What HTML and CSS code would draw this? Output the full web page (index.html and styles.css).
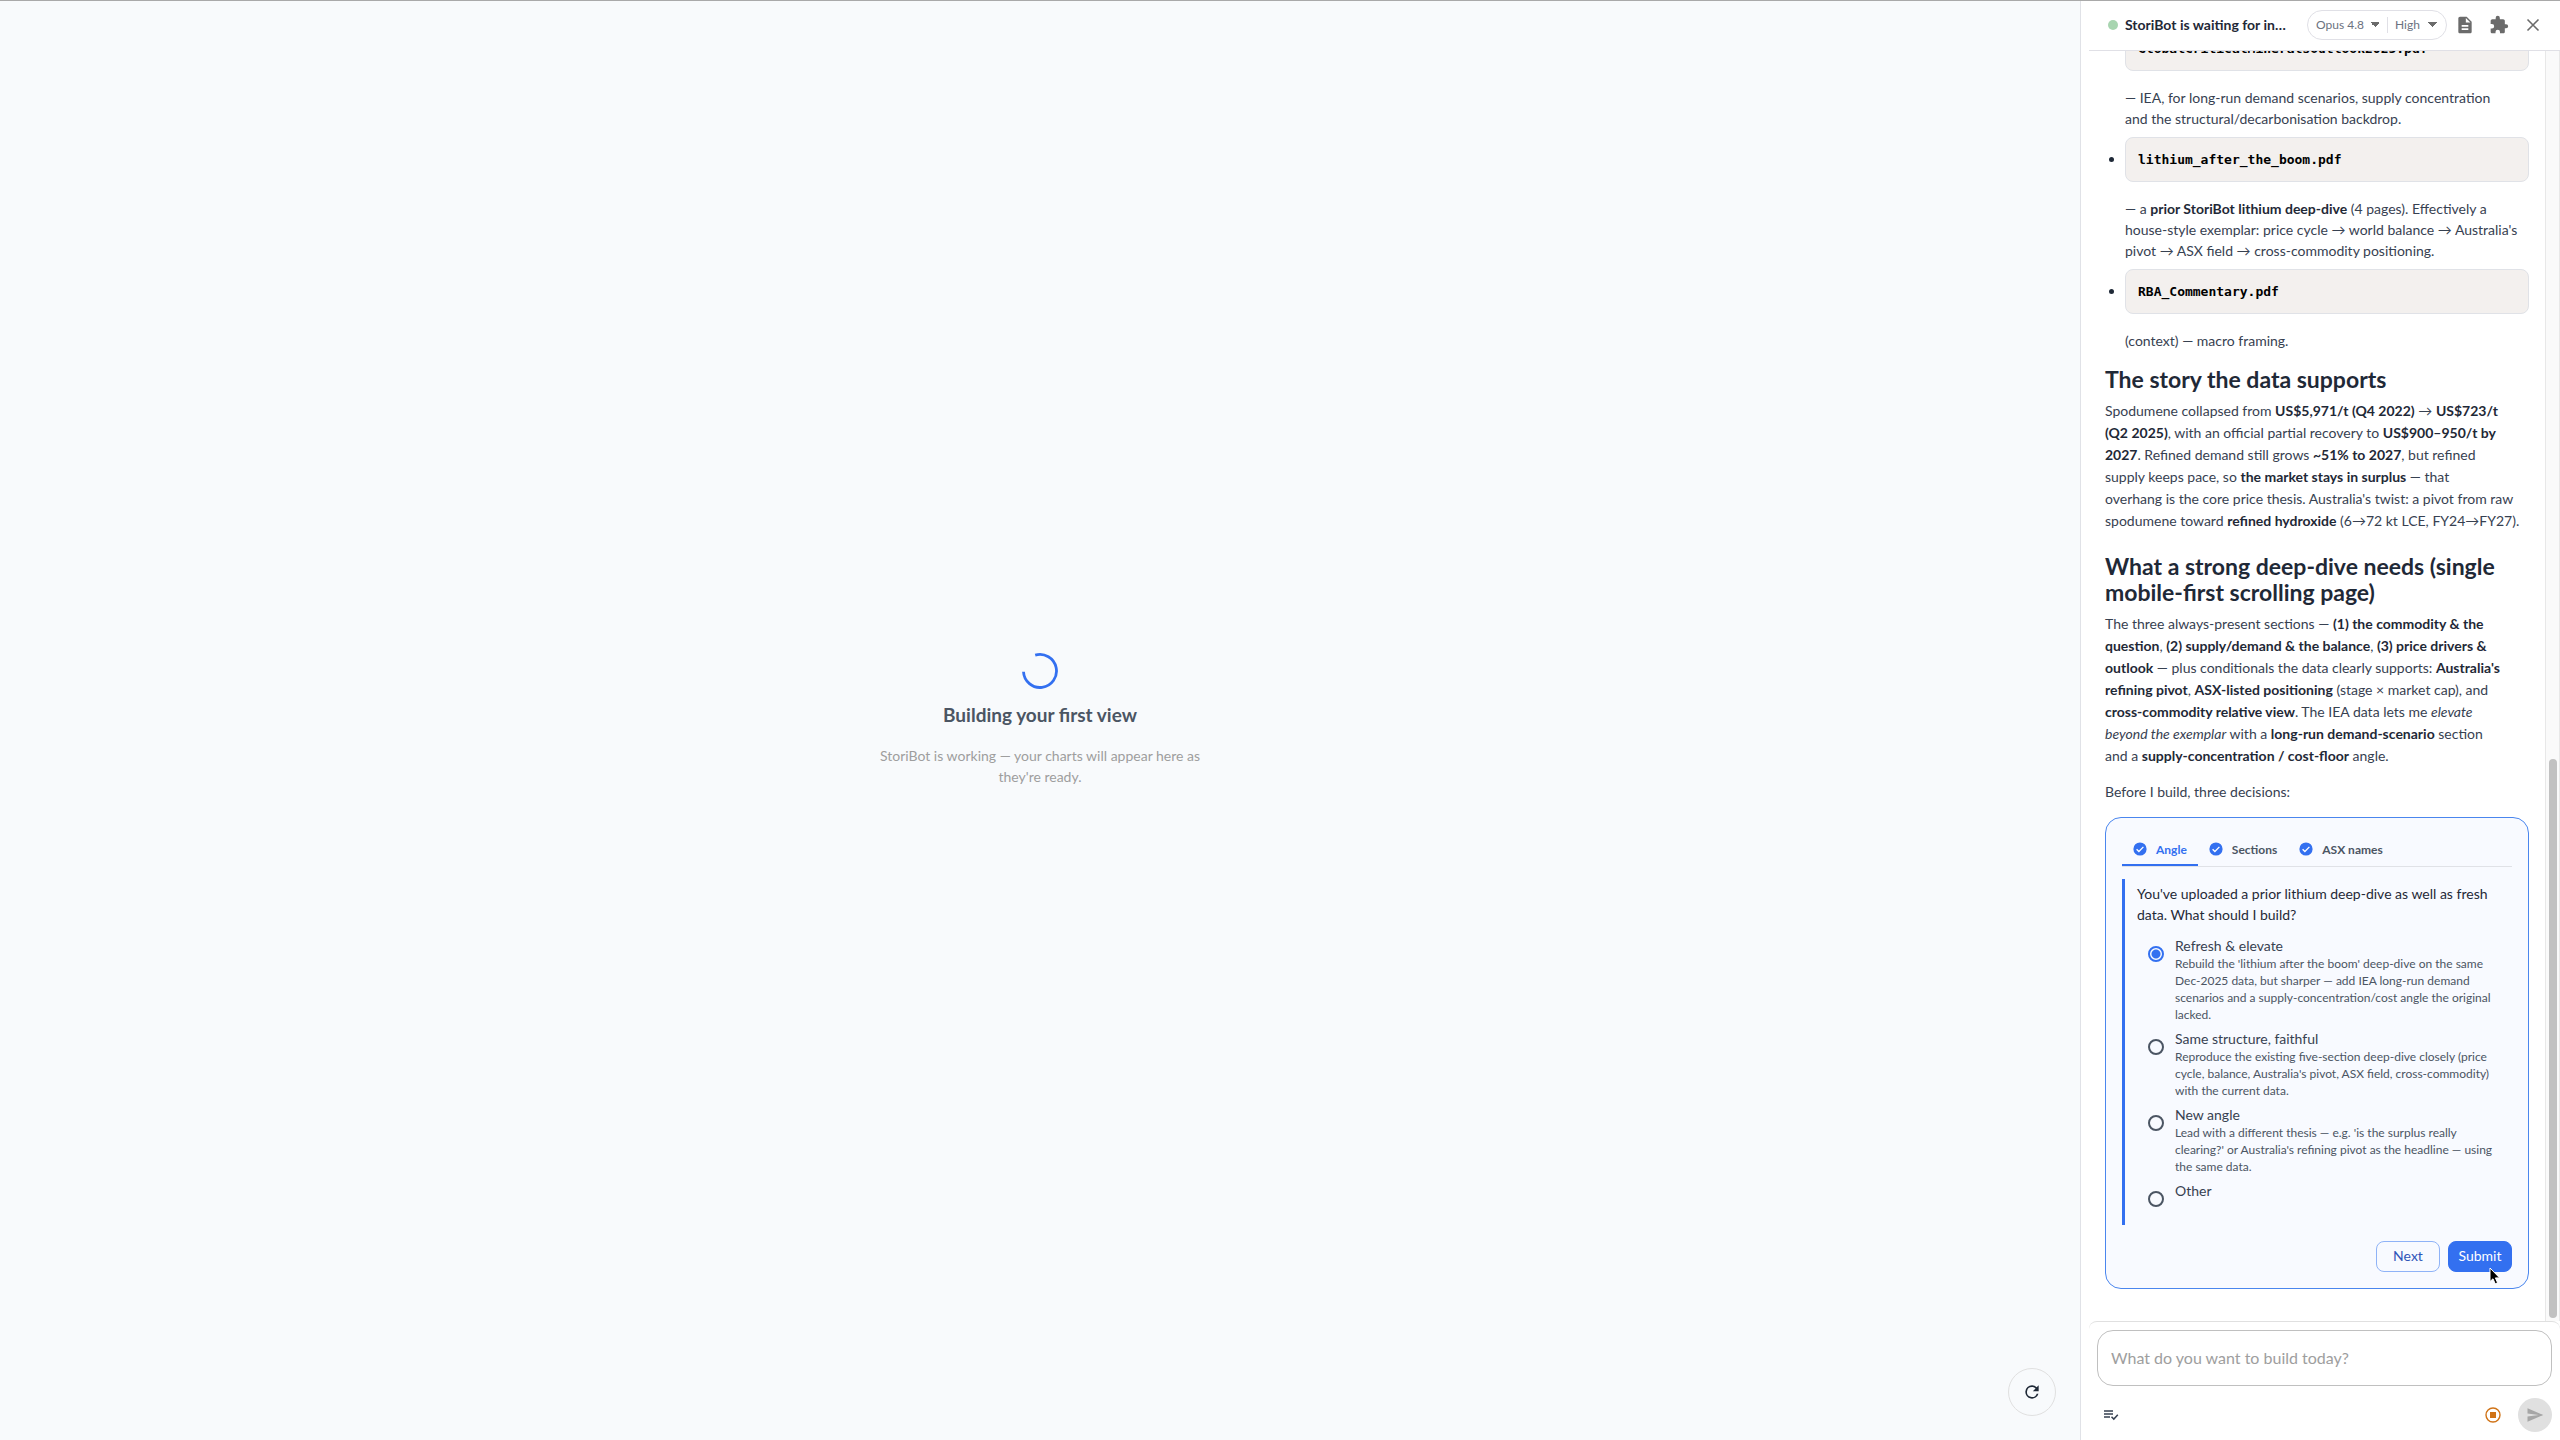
FILE: index.html
```
<!DOCTYPE html>
<html lang="en">
  <head>
    <meta charset="UTF-8" />
    <meta name="viewport" content="width=device-width, initial-scale=1.0" />
    <title>StoriBot</title>
    <link rel="stylesheet" href="styles.css">
  </head>

  <body>
    <!-- CANVAS -->
    <main class="canvas">
      <div class="building">
        <svg class="spinner" viewBox="0 0 36 36" width="36" height="36">
          <path d="M13.2 2.2A16.5 16.5 0 1 1 1.5 18.8" fill="none" stroke="#3370f0" stroke-width="2.8" />
        </svg>
        <h2>Building your first view</h2>
        <p>StoriBot is working — your charts will appear here as they're ready.</p>
      </div>
      <button class="refresh" aria-label="Refresh">
        <svg viewBox="0 0 24 24" width="20" height="20">
          <path d="M17.65 6.35A7.96 7.96 0 0 0 12 4a8 8 0 1 0 7.73 10h-2.08A6 6 0 1 1 12 6c1.66 0 3.14.69 4.22 1.78L13 11h7V4z" fill="#1f2937" />
        </svg>
      </button>
    </main>

    <!-- CHAT PANEL -->
    <aside class="panel">
      <header class="panel-header">
        <span class="status-dot"></span>
        <h1 class="panel-title">StoriBot is waiting for input from you</h1>
        <div class="model-pill">
          <select class="select-model" aria-label="Model"><option>Opus 4.8</option></select>
          <select class="select-effort" aria-label="Effort"><option>High</option></select>
        </div>
        <div class="header-icons">
          <button class="icon-button" aria-label="Documents">
            <svg viewBox="0 0 24 24" width="20" height="20"><path d="M14 2H6c-1.100 0-2 .9-2 2v16c0 1.100.9 2 2 2h12c1.100 0 2-.9 2-2V8l-6-6zm2 16H8v-2h8v2zm0-4H8v-2h8v2zm-3-5V3.500L18.500 9H13z" fill="#6b6b6b" /></svg>
          </button>
          <button class="icon-button" aria-label="Extensions">
            <svg viewBox="0 0 24 24" width="20" height="20"><path d="M20.500 11H19V7c0-1.100-.9-2-2-2h-4V3.500a2.500 2.500 0 0 0-5 0V5H4c-1.100 0-2 .9-2 2v3.800h1.500a2.700 2.700 0 0 1 0 5.400H2V20c0 1.100.9 2 2 2h3.800v-1.500a2.700 2.700 0 0 1 5.400 0V22H17c1.100 0 2-.9 2-2v-4h1.500a2.500 2.500 0 0 0 0-5z" fill="#6b6b6b" /></svg>
          </button>
          <button class="icon-button" aria-label="Close">
            <svg viewBox="0 0 20 20" width="20" height="20"><path d="M4.500 4.500l11 11M15.500 4.500l-11 11" stroke="#6b6b6b" stroke-width="1.600" /></svg>
          </button>
        </div>
      </header>

      <section class="conversation">
        <div class="messages">
          <ul class="sources">
            <li>
              <pre>GlobalCriticalMineralsOutlook2025.pdf</pre>
              <p>— IEA, for long-run demand scenarios, supply concentration<br />and the structural/decarbonisation backdrop.</p>
            </li>
            <li>
              <pre>lithium_after_the_boom.pdf</pre>
              <p>— a <b>prior StoriBot lithium deep-dive</b> (4 pages). Effectively a house-style exemplar: price cycle → world balance → Australia's pivot → ASX field → cross-commodity positioning.</p>
            </li>
            <li>
              <pre>RBA_Commentary.pdf</pre>
              <p>(context) — macro framing.</p>
            </li>
          </ul>

          <h2>The story the data supports</h2>
          <p class="prose">Spodumene collapsed from <b>US$5,971/t (Q4 2022)</b> → <b>US$723/t<br />(Q2 2025)</b>, with an official partial recovery to <b>US$900–950/t by<br />2027</b>. Refined demand still grows <b>~51% to 2027</b>, but refined<br />supply keeps pace, so <b>the market stays in surplus</b> — that<br />overhang is the core price thesis. Australia's twist: a pivot from raw<br />spodumene toward <b>refined hydroxide</b> (6→72 kt LCE, FY24→FY27).</p>

          <h2>What a strong deep-dive needs (single mobile-first scrolling page)</h2>
          <p class="prose">The three always-present sections — <b>(1) the commodity &amp; the<br />question</b>, <b>(2) supply/demand &amp; the balance</b>, <b>(3) price drivers &amp;<br />outlook</b> — plus conditionals the data clearly supports: <b>Australia's<br />refining pivot</b>, <b>ASX-listed positioning</b> (stage × market cap), and<br /><b>cross-commodity relative view</b>. The IEA data lets me <i>elevate<br />beyond the exemplar</i> with a <b>long-run demand-scenario</b> section<br />and a <b>supply-concentration / cost-floor</b> angle.</p>
          <p class="prose">Before I build, three decisions:</p>

          <form class="question-card">
            <div class="tabs" role="tablist">
              <button type="button" class="tab active" role="tab" aria-selected="true">
                <svg viewBox="0 0 14 14" width="14" height="14"><circle cx="7" cy="7" r="6.600" fill="#3370f0" /><path d="M3.600 7.200l2.300 2.300 4.500-4.600" fill="none" stroke="#fff" stroke-width="1.300" /></svg>
                Angle
              </button>
              <button type="button" class="tab" role="tab">
                <svg viewBox="0 0 14 14" width="14" height="14"><circle cx="7" cy="7" r="6.600" fill="#3370f0" /><path d="M3.600 7.200l2.300 2.300 4.500-4.600" fill="none" stroke="#fff" stroke-width="1.300" /></svg>
                Sections
              </button>
              <button type="button" class="tab" role="tab">
                <svg viewBox="0 0 14 14" width="14" height="14"><circle cx="7" cy="7" r="6.600" fill="#3370f0" /><path d="M3.600 7.200l2.300 2.300 4.500-4.600" fill="none" stroke="#fff" stroke-width="1.300" /></svg>
                ASX names
              </button>
            </div>

            <fieldset class="question">
              <legend>You've uploaded a prior lithium deep-dive as well as fresh data. What should I build?</legend>
              <label class="option">
                <input type="radio" name="angle" checked />
                <span class="option-text">
                  <span class="option-title">Refresh &amp; elevate</span>
                  <span class="option-desc">Rebuild the 'lithium after the boom' deep-dive on the same<br />Dec-2025 data, but sharper — add IEA long-run demand<br />scenarios and a supply-concentration/cost angle the original<br />lacked.</span>
                </span>
              </label>
              <label class="option">
                <input type="radio" name="angle" />
                <span class="option-text">
                  <span class="option-title">Same structure, faithful</span>
                  <span class="option-desc">Reproduce the existing five-section deep-dive closely (price cycle, balance, Australia's pivot, ASX field, cross-commodity) with the current data.</span>
                </span>
              </label>
              <label class="option">
                <input type="radio" name="angle" />
                <span class="option-text">
                  <span class="option-title">New angle</span>
                  <span class="option-desc">Lead with a different thesis — e.g. 'is the surplus really<br />clearing?' or Australia's refining pivot as the headline — using<br />the same data.</span>
                </span>
              </label>
              <label class="option">
                <input type="radio" name="angle" />
                <span class="option-text">
                  <span class="option-title">Other</span>
                </span>
              </label>
            </fieldset>

            <div class="actions">
              <button type="button" class="btn">Next</button>
              <button type="button" class="btn btn-primary">
                Submit
                <svg class="cursor" viewBox="0 0 12 18" width="12" height="18"><path d="M1 1v13.500l3-2.700 2.200 5 2.400-1-2.200-4.900h4.200z" fill="#000" stroke="#fff" stroke-width="1" /></svg>
              </button>
            </div>
          </form>
        </div>
        <div class="scroll-track"><div class="scroll-thumb"></div></div>
      </section>

      <footer class="composer">
        <input type="text" class="prompt" aria-label="Message" placeholder="What do you want to build today?" />
        <div class="composer-bar">
          <button class="icon-button plan" aria-label="Plan">
            <svg viewBox="0 0 16 12" width="16" height="12"><path d="M1 2h9M1 5h9M1 8h6" stroke="#374151" stroke-width="1.500" /><path d="M8.500 7.800l2.300 2.300 4-4.300" fill="none" stroke="#374151" stroke-width="1.500" /></svg>
          </button>
          <button class="icon-button stop" aria-label="Stop">
            <svg viewBox="0 0 16 16" width="16" height="16"><circle cx="8" cy="8" r="7" fill="none" stroke="#d07317" stroke-width="1.400" /><path d="M5 5h6v6H5z" fill="#d07317" /></svg>
          </button>
          <button class="send" aria-label="Send">
            <svg viewBox="0 0 24 24" width="18" height="18"><path d="M2 21l21-9L2 3v7l15 2-15 2z" fill="#a6a6a6" /></svg>
          </button>
        </div>
      </footer>
    </aside>
  </body>
</html>
```

FILE: styles.css
```
* {
  box-sizing: border-box;
}

body {
  display: flex;
  height: 100vh;
  margin: 0;
  border-top: 1px solid #a9a9a9;
  background: #f8fafc;
  color: #1f2937;
  font-family: Lato, "Liberation Sans", sans-serif;
  font-size: 14px;
}

h1, h2, p, ul, pre {
  margin: 0;
}

button, input, select {
  font-family: inherit;
}

button {
  padding: 0;
  border: none;
  background: none;
  cursor: pointer;
}

svg {
  display: block;
  flex: none;
}

/* canvas */
.canvas {
  position: relative;
  flex: 1;
  display: flex;
  align-items: center;
  justify-content: center;
}

.building {
  display: flex;
  flex-direction: column;
  align-items: center;
  width: 360px;
  padding-bottom: 2px;
  text-align: center;
}

.building h2 {
  margin: 12px 0 16px;
  font-size: 19px;
  line-height: 28px;
  font-weight: 700;
  color: #4b5563;
}

.building p {
  line-height: 21px;
  color: #9e9e9e;
}

.refresh {
  position: absolute;
  right: 24px;
  bottom: 24px;
  display: flex;
  align-items: center;
  justify-content: center;
  width: 48px;
  height: 48px;
  border: 1px solid #e0e0e0;
  border-radius: 50%;
}

/* panel */
.panel {
  display: flex;
  flex-direction: column;
  width: 480px;
  padding-left: 8px;
  border-left: 1px solid #e0e2e7;
  background: #fff;
}

.panel-header {
  display: flex;
  align-items: center;
  height: 50px;
  padding: 0 17px 2px 19px;
  border-bottom: 1px solid #e0e0e6;
}

.status-dot {
  flex: none;
  width: 10px;
  height: 10px;
  margin-right: 7px;
  border-radius: 50%;
  background: #a8d5b0;
}

.panel-title {
  flex: 1;
  margin-right: 16px;
  font-size: 14px;
  font-weight: 700;
  overflow: hidden;
  text-overflow: ellipsis;
  white-space: nowrap;
}

.model-pill {
  flex: none;
  display: flex;
  align-items: center;
  width: 140px;
  height: 30px;
  padding: 0 9px 0 8px;
  border: 1px solid #e0e0e6;
  border-radius: 15px;
}

.model-pill select {
  height: 16px;
  padding: 0;
  border: none;
  appearance: none;
  background: conic-gradient(from 315deg at 50% 100%, #6b6b6b 90deg, transparent 0) right center / 10px 5px no-repeat;
  color: #6b7280;
  font-size: 12px;
}

.model-pill .select-model {
  width: 64px;
}

.model-pill .select-effort {
  flex: 1;
  margin-left: 7px;
  padding-left: 7px;
  border-left: 1px solid #e0e0e6;
}

.header-icons {
  display: flex;
  gap: 14px;
  margin-left: 8px;
}

.icon-button {
  display: flex;
  align-items: center;
}

/* conversation */
.conversation {
  flex: 1;
  display: flex;
  min-height: 0;
}

.messages {
  flex: 1;
  display: flex;
  flex-direction: column;
  justify-content: flex-end;
  overflow: hidden;
  padding: 0 16px 32px;
}

.sources {
  padding-left: 20px;
  line-height: 21px;
  color: #374151;
}

.sources li {
  margin-bottom: 8px;
}

.sources li::marker {
  color: #1f2937;
}

.sources pre {
  height: 45px;
  margin-bottom: 16px;
  padding: 0 12px;
  border: 1px solid #e0e2e7;
  border-radius: 8px;
  background: #f3f0ee;
  color: #000;
  font-family: "DejaVu Sans Mono", monospace;
  font-size: 13px;
  font-weight: 700;
  line-height: 43px;
}

.messages h2 {
  margin: 7px 0 8px;
  font-size: 23px;
  line-height: 26px;
  font-weight: 700;
}

.prose {
  margin-bottom: 14px;
  line-height: 22px;
  color: #374151;
}

.messages b {
  font-weight: 700;
  color: #1f2937;
}

.question-card {
  padding: 16px;
  border: 1px solid #4a86ee;
  border-radius: 16px;
  background: #f8faff;
}

.tabs {
  display: flex;
  height: 33px;
  border-bottom: 1px solid #e0e2e7;
}

.tab {
  display: flex;
  align-items: center;
  gap: 9px;
  padding: 0 11px;
  border-bottom: 2px solid transparent;
  color: #4b5563;
  font-size: 12px;
  font-weight: 700;
}

.tab.active {
  border-color: #3370f0;
  color: #3370f0;
}

.question {
  min-width: 0;
  margin: 12px 0 16px;
  padding: 4px 0 1px 12px;
  border: none;
  border-left: 3px solid #3370f0;
}

.question legend {
  float: left;
  width: 100%;
  padding: 0;
  margin-bottom: 12px;
  line-height: 21px;
}

.option {
  clear: both;
  display: flex;
  min-height: 35px;
  padding-left: 11px;
  margin-bottom: 7px;
}

.option input {
  flex: none;
  appearance: none;
  width: 16px;
  height: 16px;
  margin: 9px 11px 0 0;
  border: 2px solid #4b5563;
  border-radius: 50%;
}

.option input:checked {
  border-color: #3370f0;
  background: radial-gradient(circle, #3370f0 4px, transparent 5px);
}

.option-title {
  display: block;
  line-height: 18px;
  color: #374151;
}

.option-desc {
  display: block;
  font-size: 12px;
  line-height: 17px;
  color: #4b5563;
}

.actions {
  display: flex;
  justify-content: flex-end;
  gap: 8px;
}

.btn {
  position: relative;
  width: 64px;
  height: 31px;
  padding-bottom: 2px;
  border: 1px solid #8fb3f7;
  border-radius: 8px;
  color: #2f55b8;
  font-size: 14px;
}

.btn-primary {
  border-color: #3370f0;
  background: #3370f0;
  color: #fff;
}

.cursor {
  position: absolute;
  left: 40px;
  top: 25px;
}

.scroll-track {
  width: 15px;
  padding: 708px 2px 3px 3px;
  border-left: 1px solid #e8e8e8;
  border-right: 1px solid #e8e8e8;
  background: #fafafa;
}

.scroll-thumb {
  height: 100%;
  border-radius: 4px;
  background: #c1c1c1;
}

/* composer */
.composer {
  padding: 8px;
  border-top: 1px solid #e0e0e0;
  border-radius: 8px 8px 0 0;
}

.prompt {
  display: block;
  width: 100%;
  height: 56px;
  padding: 0 13px 2px;
  border: 1px solid #c0c0c0;
  border-radius: 16px;
  background: #fff;
  font-size: 16px;
}

.prompt::placeholder {
  color: #9e9e9e;
}

.composer-bar {
  display: flex;
  align-items: center;
  margin-top: 12px;
  padding-left: 6px;
}

.stop {
  margin-left: auto;
  margin-right: 17px;
}

.send {
  display: flex;
  align-items: center;
  justify-content: center;
  width: 34px;
  height: 34px;
  border-radius: 50%;
  background: #e0e0e0;
}
```
